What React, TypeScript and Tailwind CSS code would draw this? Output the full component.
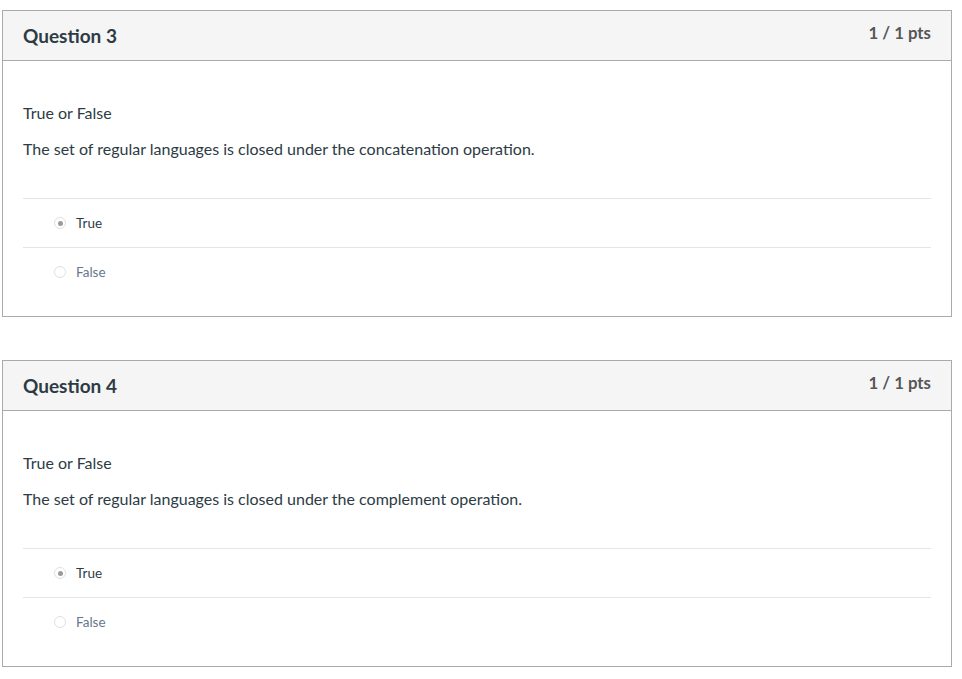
import React from 'react';

type Question = {
  number: number;
  statement: string;
};

const questions: Question[] = [
  { number: 3, statement: 'The set of regular languages is closed under the concatenation operation.' },
  { number: 4, statement: 'The set of regular languages is closed under the complement operation.' },
];

const Radio: React.FC<{ checked: boolean }> = ({ checked }) => (
  <span className="flex h-[12px] w-[12px] items-center justify-center rounded-full border border-[#e0e0e0] bg-white">
    {checked && <span className="h-[5px] w-[5px] rounded-full bg-[#9a9a9a]" />}
  </span>
);

const QuestionCard: React.FC<{ q: Question }> = ({ q }) => (
  <div className="w-[950px] border border-[#aaaaaa] bg-white">
    {/* header */}
    <div className="flex h-[50px] items-start justify-between border-b border-[#aaaaaa] bg-[#f5f5f5] px-5">
      <h2 className="pt-[12px] text-[19px] font-bold leading-[26px] text-[#2d3b45]">Question {q.number}</h2>
      <span className="pt-[11px] text-[16.8px] font-bold leading-[22px] text-[#565656]">1 / 1 pts</span>
    </div>

    {/* body */}
    <div className="px-5 pb-[20px] pt-[42px]">
      <p className="text-[16px] leading-[20px] text-[#2d3b45]">True or False</p>
      <p className="mt-[16px] text-[16px] leading-[20px] text-[#2d3b45]">{q.statement}</p>

      <div className="mt-[39px] border-t border-[#e5e5e5]">
        <div className="flex h-[49px] items-center gap-[10px] border-b border-[#e5e5e5] pl-[31px]">
          <Radio checked />
          <span className="text-[13.5px] text-[#2d3b45]">True</span>
        </div>
        <div className="flex h-[48px] items-center gap-[10px] pl-[31px]">
          <Radio checked={false} />
          <span className="text-[13.5px] text-[#66788a]">False</span>
        </div>
      </div>
    </div>
  </div>
);

export default function App() {
  return (
    <div className="min-h-screen bg-white pl-[2px] pt-[10px] font-['Lato',sans-serif]">
      <div className="flex flex-col gap-[43px]">
        {questions.map((q) => (
          <QuestionCard key={q.number} q={q} />
        ))}
      </div>
    </div>
  );
}
